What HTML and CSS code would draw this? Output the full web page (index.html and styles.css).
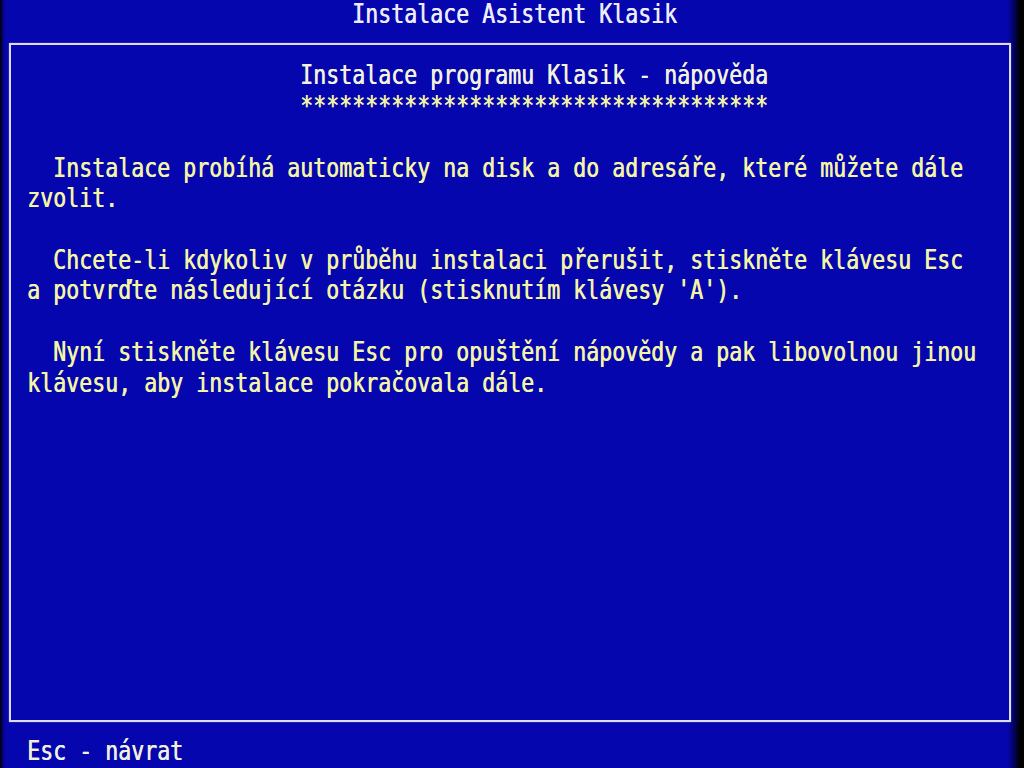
FILE: index.html
```html
<!DOCTYPE html>
<html lang="cs">
<head>
<meta charset="utf-8">
<title>Instalace Asistent Klasik</title>
<link rel="stylesheet" href="styles.css">
</head>
<body>
<div class="screen">
  <div class="row title">                           Instalace Asistent Klasik</div>
  <div class="box">
    <div class="row"></div>
    <div class="row head">                       Instalace programu Klasik - nápověda</div>
    <div class="row stars">                       ************************************</div>
    <div class="row"></div>
    <div class="row text">    Instalace probíhá automaticky na disk a do adresáře, které můžete dále</div>
    <div class="row text">  zvolit.</div>
    <div class="row"></div>
    <div class="row text">    Chcete-li kdykoliv v průběhu instalaci přerušit, stiskněte klávesu Esc</div>
    <div class="row text">  a potvrďte následující otázku (stisknutím klávesy 'A').</div>
    <div class="row"></div>
    <div class="row text">    Nyní stiskněte klávesu Esc pro opuštění nápovědy a pak libovolnou jinou</div>
    <div class="row text">  klávesu, aby instalace pokračovala dále.</div>
  </div>
  <div class="row footer">  Esc - návrat</div>
</div>
</body>
</html>
```
FILE: styles.css
```css
html, body {
  margin: 0;
  padding: 0;
  width: 1024px;
  height: 768px;
  overflow: hidden;
}
body {
  background: linear-gradient(to right, #000 0, #03037e 3px, #0606ae 6px, #0606ae 1008px, #03036a 1013px, #000 1020px);
}
.screen {
  display: flex;
  flex-direction: column;
  padding-left: 1px;
  font-family: "DejaVu Sans Mono", "Liberation Mono", monospace;
  font-size: 21.6px;
  color: #f4f4a6;
}
.row {
  height: 30.72px;
  line-height: 30.72px;
  white-space: pre;
  transform: scaleY(1.22);
  flex: none;
  text-shadow: 0.5px 0 0 currentColor;
}
.title {
  color: #ececf8;
}
.box {
  position: relative;
  height: 706.56px;
  flex: none;
}
.box::before {
  content: "";
  position: absolute;
  left: 8px;
  top: 12.5px;
  width: 998px;
  height: 675px;
  border: 2px solid #dcdcf4;
  box-shadow: 0 0 1px #9a9ae0;
}
.head {
  color: #f2f2dc;
}
.stars {
  color: #f4f4a6;
}
.footer {
  color: #f0f0dc;
}
```
